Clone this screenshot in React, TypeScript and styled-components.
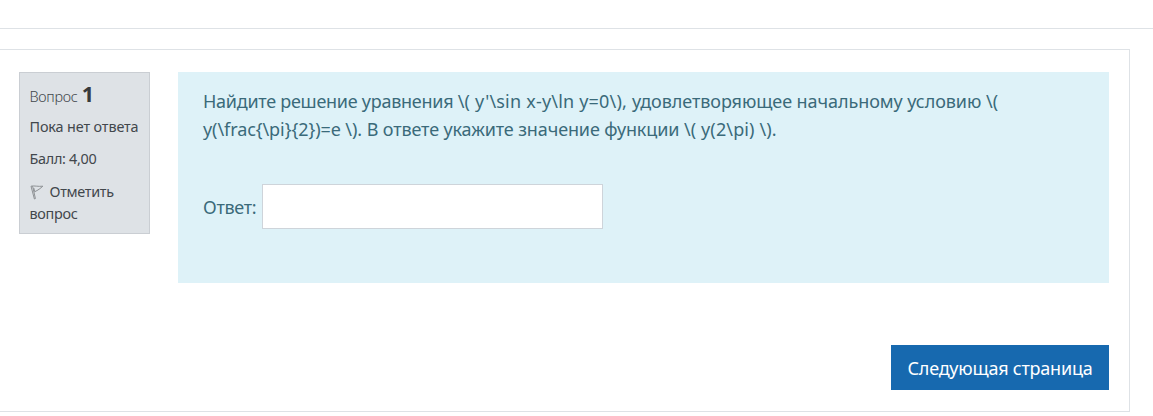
import React from "react";
import styled, { createGlobalStyle } from "styled-components";

const GlobalStyle = createGlobalStyle`
  *, *::before, *::after { box-sizing: border-box; }
  body {
    margin: 0;
    background: #fff;
    color: #42474c;
    font-family: "Noto Sans", "Open Sans", sans-serif;
    overflow: hidden;
  }
`;

const Page = styled.div`
  display: flex;
  flex-direction: column;
  height: 416px;
`;

const TopBar = styled.header`
  height: 29px;
  border-bottom: 1px solid #dee2e6;
`;

const Card = styled.main`
  display: flex;
  flex-direction: column;
  width: 1130px;
  height: 363px;
  margin-top: 20px;
  padding: 22px 20px 0 19px;
  border: 1px solid #dee2e6;
  border-left: 0;
`;

const Question = styled.section`
  display: flex;
  align-items: flex-start;
  justify-content: space-between;
`;

const Info = styled.aside`
  width: 131px;
  height: 162px;
  padding: 10px 0 0 9.5px;
  border: 1px solid #caced3;
  background: #dee2e6;
  font-size: 14.4px;
  line-height: 22px;
  white-space: nowrap;
`;

const QuestionNo = styled.h3`
  margin: 0;
  height: 26px;
  font-size: 14.4px;
  font-weight: 300;
  line-height: 26px;
  letter-spacing: -0.25px;
`;

const Number = styled.span`
  margin-left: 4px;
  color: #373a3c;
  font-size: 21.6px;
  font-weight: 700;
  line-height: 22px;
`;

const InfoLine = styled.div<{ $gap: number; $spacing: number }>`
  margin-top: ${(p) => p.$gap}px;
  letter-spacing: ${(p) => p.$spacing}px;
`;

const Flag = styled.svg`
  width: 14px;
  height: 16px;
  margin-right: 6px;
  vertical-align: -3px;
`;

const Formulation = styled.div`
  width: 931px;
  height: 211px;
  padding: 15px 25px 0;
  background: #def2f8;
  color: #3a6a7a;
  font-size: 18px;
  line-height: 28px;
`;

const TextLine = styled.div`
  white-space: nowrap;
`;

const Run = styled.span<{ $spacing: number }>`
  letter-spacing: ${(p) => p.$spacing}px;
`;

const Answer = styled.label`
  display: flex;
  align-items: center;
  gap: 5px;
  margin-top: 41px;
  letter-spacing: -0.3px;
`;

const AnswerLabel = styled.span`
  width: 54px;
  white-space: nowrap;
`;

const AnswerInput = styled.input`
  width: 341px;
  height: 45px;
  padding: 0 12px;
  border: 1px solid #ced4da;
  border-radius: 0;
  background: #fff;
  font: inherit;
`;

const NextButton = styled.button`
  align-self: flex-end;
  width: 218px;
  height: 45px;
  margin-top: 62px;
  padding: 0;
  border: 0;
  background: #1769af;
  color: #fff;
  font: 18px/28px "Noto Sans", "Open Sans", sans-serif;
  letter-spacing: -0.22px;
  white-space: nowrap;
`;

export default function App() {
  return (
    <>
      <GlobalStyle />
      <Page>
        <TopBar />
        <Card>
          <Question>
            <Info>
              <QuestionNo>
                Вопрос<Number>1</Number>
              </QuestionNo>
              <InfoLine $gap={7} $spacing={-0.13}>Пока нет ответа</InfoLine>
              <InfoLine $gap={10} $spacing={-0.3}>Балл: 4,00</InfoLine>
              <InfoLine $gap={11} $spacing={-0.3}>
                <Flag viewBox="0 0 14 16" fill="none" stroke="#85888b" strokeWidth="0.9">
                  <path d="M1 2.2 L4.4 15 L5.4 14.6 L2.6 2.2 M1 2.2 C4 1.4 8 2.8 12.8 2.2 C10.5 4.4 8 6.2 4.6 7.8 M3.8 4 L4.7 7.6" />
                </Flag>
                Отметить
                <br />
                вопрос
              </InfoLine>
            </Info>
            <Formulation>
              <TextLine>
                <Run $spacing={-0.27}>{"Найдите решение уравнения "}</Run>
                <Run $spacing={0.2}>{"\\( y'\\sin x-y\\ln y=0\\), "}</Run>
                <Run $spacing={-0.07}>{"удовлетворяющее начальному условию "}</Run>
                <Run $spacing={0.2}>{"\\("}</Run>
              </TextLine>
              <TextLine>
                <Run $spacing={-0.08}>{"y(\\frac{\\pi}{2})=e \\). "}</Run>
                <Run $spacing={-0.12}>{"В ответе укажите значение функции "}</Run>
                <Run $spacing={0.13}>{"\\( y(2\\pi) \\)."}</Run>
              </TextLine>
              <Answer>
                <AnswerLabel>Ответ:</AnswerLabel>
                <AnswerInput type="text" />
              </Answer>
            </Formulation>
          </Question>
          <NextButton type="button">Следующая страница</NextButton>
        </Card>
      </Page>
    </>
  );
}
